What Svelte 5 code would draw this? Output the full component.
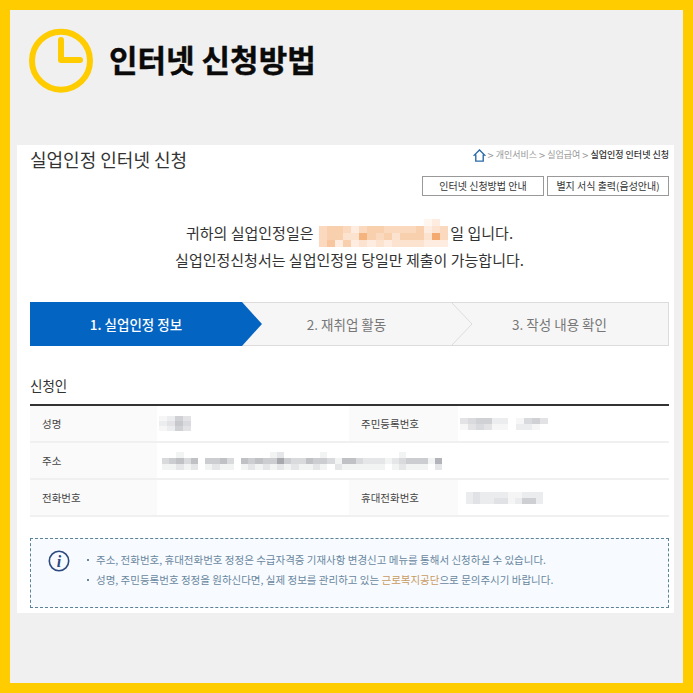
<script>
	const steps = [
		{ label: '1. 실업인정 정보', width: 212, active: true },
		{ label: '2. 재취업 활동', width: 209 },
		{ label: '3. 작성 내용 확인', width: 218 }
	];

	// blurred personal data, one digit per block (0 = white, 9 = full colour)
	const blurred = {
		date: ['0000000000000120', '4554245544445234', '4553385453555394', '4625232323333222'],
		name: ['1253', '2364', '1253'],
		rrn: ['34552201453', '13431102210'],
		address: [
			'001000000000000120000010000000000100000',
			'345350445305454474335443155322212344416',
			'112120121101212121211210211111101211102'
		],
		phone: ['23222211222', '23223312552']
	};

	function cellColor(digit, rgb) {
		const t = Number(digit) / 9;
		return `rgb(${rgb.map((c) => Math.round(255 - (255 - c) * t)).join(',')})`;
	}
</script>

{#snippet mosaic(rows, w, h, rgb)}
	<span class="mosaic">
		{#each rows as row}
			<span class="mosaic-row">
				{#each row.split('') as d}
					<span style="width:{w}px;height:{h}px;background:{cellColor(d, rgb)}"></span>
				{/each}
			</span>
		{/each}
	</span>
{/snippet}

<div class="frame">
	<header class="banner">
		<svg width="66" height="66" viewBox="0 0 66 66" fill="none" stroke="#ffcc00">
			<circle cx="33" cy="32.7" r="29" stroke-width="6" />
			<path d="M33 12 V32 H52" stroke-width="6" stroke-linecap="round" stroke-linejoin="round" />
		</svg>
		<h1>인터넷 신청방법</h1>
	</header>

	<main class="card">
		<div class="top">
			<h2>실업인정 인터넷 신청</h2>
			<div class="top-right">
				<nav class="crumbs">
					<svg width="13" height="13" viewBox="0 0 14 14" fill="none" stroke="#2b6ca8" stroke-width="1.5">
						<path d="M0.6 7.4 L7 1 L13.4 7.4 M3 6 V13 H11 V6" />
					</svg>
					<span class="sep">&gt;</span><span>개인서비스</span>
					<span class="sep">&gt;</span><span>실업급여</span>
					<span class="sep">&gt;</span><strong>실업인정 인터넷 신청</strong>
				</nav>
				<div class="buttons">
					<button>인터넷 신청방법 안내</button>
					<button>별지 서식 출력(음성안내)</button>
				</div>
			</div>
		</div>

		<div class="lead">
			<p class="date-line">귀하의 실업인정일은 {@render mosaic(blurred.date, 8.1, 7, [244, 170, 110])}일 입니다.</p>
			<p>실업인정신청서는 실업인정일 당일만 제출이 가능합니다.</p>
		</div>

		<div class="steps">
			{#each steps as step, i}
				<div class="step" class:active={step.active} style="width:{step.width}px">
					<span>{step.label}</span>
					{#if i > 0}
						<svg class="arrow" width="22" height="44" viewBox="0 0 22 44" fill="none">
							{#if i === 1}
								<path d="M0 0 L20 22 L0 44 Z" fill="#0464c2" />
							{:else}
								<path d="M0 0 L21 22 L0 44" fill="#f6f6f6" stroke="#dcdcdc" />
							{/if}
						</svg>
					{/if}
				</div>
			{/each}
		</div>

		<h3>신청인</h3>
		<div class="info">
			<div class="th">성명</div>
			<div class="td">{@render mosaic(blurred.name, 8, 5, [170, 172, 178])}</div>
			<div class="th">주민등록번호</div>
			<div class="td">{@render mosaic(blurred.rrn, 8, 6, [170, 172, 178])}</div>

			<div class="th">주소</div>
			<div class="td wide">{@render mosaic(blurred.address, 7.2, 6, [140, 143, 150])}</div>

			<div class="th">전화번호</div>
			<div class="td"></div>
			<div class="th">휴대전화번호</div>
			<div class="td phone">{@render mosaic(blurred.phone, 7, 6, [165, 168, 176])}</div>
		</div>

		<div class="notice">
			<svg width="22" height="22" viewBox="0 0 22 22" fill="none">
				<circle cx="11" cy="11" r="9.7" stroke="#2d4a7f" stroke-width="1.6" />
				<text x="11" y="16.5" text-anchor="middle" class="i">i</text>
			</svg>
			<ul>
				<li>주소, 전화번호, 휴대전화번호 정정은 수급자격증 기재사항 변경신고 메뉴를 통해서 신청하실 수 있습니다.</li>
				<li>성명, 주민등록번호 정정을 원하신다면, 실제 정보를 관리하고 있는 <em>근로복지공단</em>으로 문의주시기 바랍니다.</li>
			</ul>
		</div>
	</main>
</div>

<style>
	:global(body) {
		margin: 0;
	}

	.frame {
		box-sizing: border-box;
		width: 693px;
		height: 693px;
		padding: 18px 19px 0 7px;
		border: 10px solid #ffcc00;
		background: #f0f0f0;
		font-family: 'Noto Sans CJK KR', 'Noto Sans', sans-serif;
		color: #333;
	}

	.banner {
		display: flex;
		align-items: center;
		gap: 15px;
		height: 66px;
		margin-left: 11px;
	}

	h1 {
		margin: 0 0 4px;
		font-size: 31px;
		font-weight: 700;
		line-height: 40px;
		color: #0a0a0a;
		-webkit-text-stroke: 0.4px #0a0a0a;
	}

	.card {
		box-sizing: border-box;
		width: 657px;
		height: 468px;
		margin-top: 51px;
		padding: 0 5px 0 13px;
		background: #fff;
	}

	.top {
		display: flex;
		justify-content: space-between;
	}

	h2 {
		margin: 2px 0 0;
		font-size: 18px;
		font-weight: 400;
		line-height: 24px;
		color: #333;
	}

	.crumbs {
		display: flex;
		align-items: center;
		justify-content: flex-end;
		gap: 2px;
		height: 18px;
		margin-top: 1px;
		font-size: 9px;
		line-height: 14px;
		color: #999;
	}

	.sep {
		font-size: 11px;
	}

	.crumbs strong {
		font-weight: 500;
		color: #333;
	}

	.buttons {
		display: flex;
		gap: 3px;
		margin-top: 12px;
	}

	button {
		box-sizing: border-box;
		width: 122px;
		height: 20px;
		padding: 0;
		border: 1px solid #999;
		background: #fff;
		font: inherit;
		font-size: 10px;
		line-height: 18px;
		color: #333;
	}

	.lead {
		margin-top: 23px;
		text-align: center;
		font-size: 15px;
		line-height: 27px;
		color: #333;
	}

	.lead p {
		margin: 0;
	}

	.date-line .mosaic {
		vertical-align: middle;
		margin: -6px 2px -2px 2px;
	}

	.steps {
		display: flex;
		height: 44px;
		margin-top: 29px;
	}

	.step {
		position: relative;
		box-sizing: border-box;
		display: flex;
		align-items: center;
		justify-content: center;
		border: solid #dcdcdc;
		border-width: 1px 0;
		background: #f6f6f6;
		font-size: 13.5px;
		color: #777;
	}

	.step:last-child {
		border-right-width: 1px;
	}

	.step.active {
		border: 0;
		background: #0464c2;
		color: #fff;
		font-weight: 500;
	}

	.arrow {
		position: absolute;
		left: 0;
		top: -1px;
	}

	h3 {
		margin: 29px 0 0;
		font-size: 13.5px;
		font-weight: 400;
		line-height: 20px;
		color: #333;
	}

	.info {
		display: grid;
		grid-template-columns: 127px 192px 109px 211px;
		grid-auto-rows: 37px;
		margin-top: 9px;
		border-top: 2px solid #333;
		font-size: 10.5px;
	}

	.th,
	.td {
		display: flex;
		align-items: center;
		border-bottom: 2px solid #f0f0f0;
	}

	.th {
		padding-left: 12px;
		background: #fafafa;
		color: #444;
	}

	.td {
		padding-left: 2px;
	}

	.wide {
		grid-column: span 3;
		padding-left: 5px;
	}

	.phone {
		padding-left: 8px;
	}

	.notice {
		box-sizing: border-box;
		display: flex;
		align-items: flex-start;
		gap: 17px;
		height: 70px;
		margin-top: 21px;
		padding: 11px 0 0 17px;
		border: 1px dashed #5b8297;
		background: #f7fbff;
	}

	.i {
		font-family: 'Liberation Serif', serif;
		font-size: 16px;
		font-style: italic;
		font-weight: 700;
		fill: #2d4a7f;
	}

	ul {
		margin: 0;
		padding: 0;
		list-style: none;
		font-size: 10.5px;
		line-height: 20px;
		color: #6a879e;
	}

	li {
		position: relative;
		padding-left: 9px;
	}

	li::before {
		content: '';
		position: absolute;
		left: 0;
		top: 9px;
		width: 2px;
		height: 2px;
		background: #6a879e;
	}

	em {
		font-style: normal;
		color: #c99a5f;
	}

	.mosaic {
		display: inline-flex;
		flex-direction: column;
	}

	.mosaic-row {
		display: flex;
	}

	.mosaic-row span {
		display: block;
		flex: none;
	}
</style>
